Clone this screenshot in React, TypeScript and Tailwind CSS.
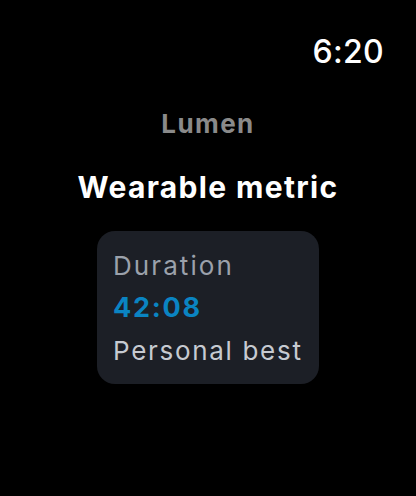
export default function App() {
  return (
    <div
      className="flex h-[496px] w-[416px] flex-col bg-black text-white"
      style={{ fontFamily: "Inter, 'Noto Sans', sans-serif" }}
    >
      <div className="flex justify-end pr-[32px] pt-[36px]">
        <span className="text-[32px] font-medium leading-none tracking-[0.01em]">6:20</span>
      </div>
      <div className="mt-[43px] flex flex-col items-center">
        <p className="text-[26px] font-bold leading-none tracking-[0.055em] text-[#8a8a8a]">Lumen</p>
        <h1 className="mt-[35px] text-[30px] font-bold leading-none tracking-[0.045em]">Wearable metric</h1>
        <div className="mt-[29px] flex w-[222px] flex-col rounded-[18px] bg-[#1c1f26] pb-[20px] pl-[16px] pt-[22px]">
          <span className="text-[26px] leading-none tracking-[0.08em] text-[#9ba1ab]">Duration</span>
          <span className="mt-[15px] text-[27px] font-bold leading-none tracking-[0.065em] text-[#0a84c2]">42:08</span>
          <span className="mt-[17px] text-[26px] leading-none tracking-[0.065em] text-[#c6cad1]">Personal best</span>
        </div>
      </div>
    </div>
  );
}
